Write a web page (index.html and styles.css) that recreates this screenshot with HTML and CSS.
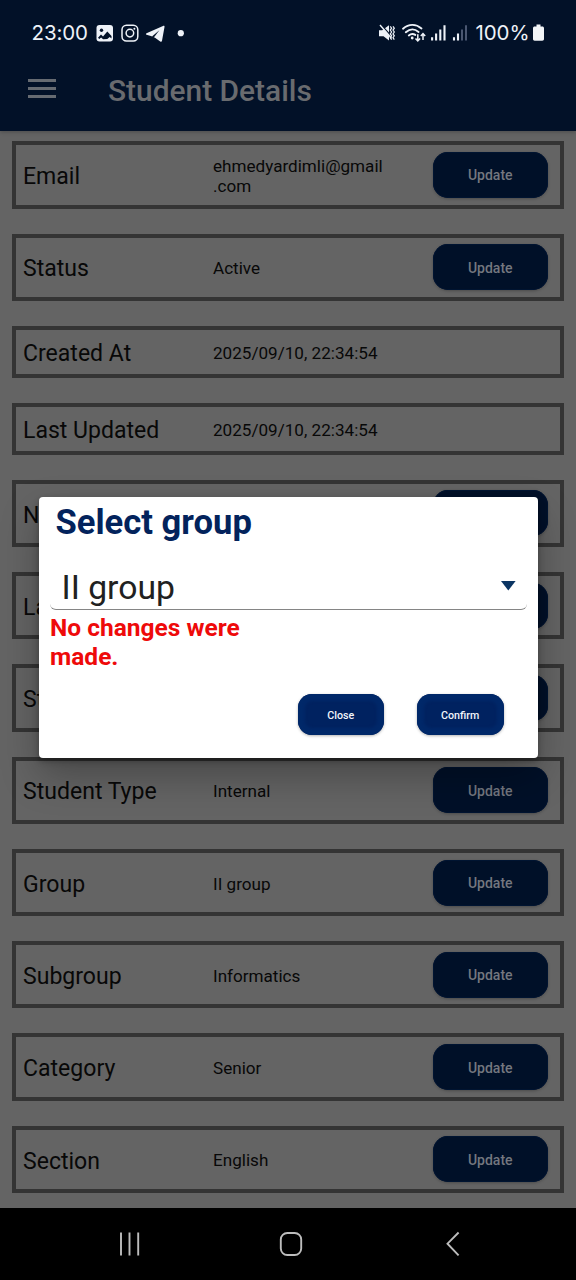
FILE: index.html
```html
<!DOCTYPE html>
<html lang="en">
<head>
<meta charset="utf-8">
<title>Student Details</title>
<link rel="stylesheet" href="styles.css">
</head>
<body>
<div class="screen">
  <header class="header">
    <div class="status">
      <span class="clock">23:00</span>
      <svg class="status-left" width="94" height="24" viewBox="94 21 94 24">
        <rect x="96.500" y="25" width="16.500" height="16.500" rx="3" fill="#eef2f8"/>
        <circle cx="101.500" cy="30.300" r="1.700" fill="#021128"/>
        <path d="M98 37.800l3-3.200 2 1.800 4.300-5 4.200 4.600v2.500l-1.800-1.500-2.400 2-4.200.2-2-1.700-1.800 1.500z" fill="#021128"/>
        <rect x="122" y="25.200" width="15.800" height="15.800" rx="4.500" fill="none" stroke="#eef2f8" stroke-width="1.500"/>
        <circle cx="129.900" cy="33.100" r="3.800" fill="none" stroke="#eef2f8" stroke-width="1.500"/>
        <circle cx="134.400" cy="28.700" r="1" fill="#eef2f8"/>
        <path d="M146.500 33.200l16.500-7.300c1.100-.4 1.700.1 1.500 1.200l-2.500 13.700c-.2 1.100-.9 1.300-1.800.7l-4.800-3.400-1.400-.9-2.400-.9-5-1.500c-.9-.3-.9-.8-.1-1.600z" fill="#eef2f8"/>
        <path d="M152 36.600l7.400-6.300-5.600 7.100z" fill="#021128"/>
        <circle cx="180.800" cy="33.200" r="3.100" fill="#eef2f8"/>
      </svg>
      <svg class="status-right" width="92" height="24" viewBox="377 21 92 24">
        <path d="M379 30.200h3.200l6.800-4.900v15.200l-5.500-4.200H379z" fill="#eef2f8"/>
        <path d="M380.600 24.200l12.500 14" stroke="#021128" stroke-width="1.400"/>
        <path d="M380 25l11.500 13.200" stroke="#eef2f8" stroke-width="1.400"/>
        <path d="M390.300 26.300l1.300 1.900-1.300 1.900 1.300 1.900-1.300 1.900 1.300 1.900-1.300 1.900 1.300 1.900M393 26.300l1.300 1.900-1.300 1.900 1.300 1.900-1.300 1.900 1.300 1.900-1.300 1.900 1.300 1.900" fill="none" stroke="#eef2f8" stroke-width="1.200"/>
        <g fill="none" stroke="#eef2f8" stroke-width="1.900" stroke-linecap="round">
          <path d="M403 28.700c5.800-5 13-5 18.500-.2M405.800 32.200c4.200-3.600 8.800-3.600 12.800-.2M408.800 35.400c2.200-1.800 4.300-1.900 6.500-.5"/>
        </g>
        <circle cx="412.200" cy="38" r="1.400" fill="#eef2f8"/>
        <path d="M417.800 34.300v6.300m-2.300-2.200l2.300 2.500 2.300-2.500M423 40v-6.200m-2.200 2.300l2.200-2.500 2.200 2.500" fill="none" stroke="#eef2f8" stroke-width="1.500"/>
        <g stroke="#eef2f8" stroke-width="2.100">
          <path d="M432.100 37.300V40.500M436.100 33.500v7M440.300 29.500v11M444.500 25.300v15.200"/>
          <path d="M454 37.300V40.500M458 33.500v7"/>
          <path d="M462 29.500v11M466 25.300v15.200" stroke="#53607a" stroke-width="1.800"/>
        </g>
      </svg>
      <span class="percent">100%</span>
      <svg class="battery" width="14" height="20" viewBox="0 0 14 20">
        <path d="M4.500 1.500h4v2h1.800c1 0 1.700.6 1.700 1.700v10.800c0 1-.7 1.700-1.700 1.700H2.700C1.700 17.700 1 17 1 16V5.200c0-1.100.7-1.700 1.700-1.700h1.800z" fill="#f2f4f7"/>
      </svg>
    </div>
    <div class="appbar">
      <div class="menu"><i></i><i></i><i></i></div>
      <h1 class="title">Student Details</h1>
    </div>
  </header>

  <main class="list">
    <section class="row"><span class="label">Email</span><span class="value">ehmedyardimli@gmail<br>.com</span><button class="update">Update</button></section>
    <section class="row"><span class="label">Status</span><span class="value">Active</span><button class="update">Update</button></section>
    <section class="row short"><span class="label">Created At</span><span class="value">2025/09/10, 22:34:54</span></section>
    <section class="row short"><span class="label">Last Updated</span><span class="value">2025/09/10, 22:34:54</span></section>
    <section class="row"><span class="label">N</span><span class="value"></span><button class="update"></button></section>
    <section class="row"><span class="label">La</span><span class="value"></span><button class="update"></button></section>
    <section class="row"><span class="label">St</span><span class="value"></span><button class="update"></button></section>
    <section class="row"><span class="label">Student Type</span><span class="value">Internal</span><button class="update">Update</button></section>
    <section class="row"><span class="label">Group</span><span class="value">II group</span><button class="update">Update</button></section>
    <section class="row"><span class="label">Subgroup</span><span class="value">Informatics</span><button class="update">Update</button></section>
    <section class="row"><span class="label">Category</span><span class="value">Senior</span><button class="update">Update</button></section>
    <section class="row"><span class="label">Section</span><span class="value">English</span><button class="update">Update</button></section>
  </main>

  <nav class="navbar">
    <svg width="28" height="28" viewBox="0 0 28 28"><path d="M5 2.500v23M13.500 2.500v23M22.200 2.500v23" stroke="#bdbdbd" stroke-width="1.900"/></svg>
    <svg width="28" height="28" viewBox="0 0 28 28"><rect x="3.800" y="3" width="20.400" height="22" rx="6.500" fill="none" stroke="#bdbdbd" stroke-width="1.900"/></svg>
    <svg width="28" height="28" viewBox="0 0 28 28"><path d="M19.600 2.500L8.500 13.700l11.100 11.600" fill="none" stroke="#bdbdbd" stroke-width="1.900"/></svg>
  </nav>

  <div class="dialog">
    <h2 class="dialog-title">Select group</h2>
    <div class="select">
      <span>II group</span>
      <svg width="15" height="10" viewBox="0 0 15 10"><path d="M0 0h14.600L7.300 9.600z" fill="#0b3563"/></svg>
    </div>
    <p class="error">No changes were made.</p>
    <div class="actions">
      <button class="action">Close</button>
      <button class="action">Confirm</button>
    </div>
  </div>
</div>
</body>
</html>
```
FILE: styles.css
```css
* { box-sizing: border-box; }
body { margin: 0; font-family: Roboto, "Liberation Sans", sans-serif; background: #646464; }
button { font-family: inherit; border: 0; padding: 0; margin: 0; }
h1, h2, p { margin: 0; }
.screen {
  position: relative;
  width: 576px;
  height: 1280px;
  display: flex;
  flex-direction: column;
  overflow: hidden;
  background: #646464;
}
.header {
  height: 131px;
  flex: none;
  background: #021128;
  box-shadow: 0 1px 4px rgba(0, 0, 0, .25);
}
.status {
  height: 60px;
  padding: 6px 0 0 31.500px;
  display: flex;
  align-items: center;
  color: #eef2f8;
  font-family: Inter, Roboto, sans-serif;
  font-size: 20.500px;
}
.clock { width: 62.500px; letter-spacing: -.1px; padding-bottom: 1.500px; }
.status-right { margin-left: 189px; }
.percent { width: 56px; margin-left: 6.500px; letter-spacing: -.1px; white-space: nowrap; padding-bottom: 1.500px; }
.battery { margin-left: .5px; }
.appbar { height: 60px; display: flex; align-items: center; padding-left: 28px; }
.menu { width: 28px; display: flex; flex-direction: column; gap: 5px; margin-top: -3px; }
.menu i { height: 3px; background: #666b72; }
.title { margin-left: 52px; font-size: 29.900px; font-weight: 500; color: #696b6f; }

.list {
  flex: 1;
  min-height: 0;
  padding: 10.300px 12px 0;
  display: flex;
  flex-direction: column;
  gap: 25px;
}
.row {
  height: 67.300px;
  flex: none;
  border: 4px solid #343434;
  padding: 0 12px 0 7px;
  display: flex;
  align-items: center;
  color: #080808;
}
.row.short { height: 51.900px; }
.label { width: 190px; font-size: 23.050px; line-height: 28px; padding-top: 4.500px; }
.row.short .label { padding-top: 4px; }
.value { flex: 1; font-size: 17.100px; line-height: 20px; padding-top: 2px; }
.update {
  width: 115.500px;
  height: 46px;
  padding-top: 1px;
  border-radius: 15px;
  background: #001028;
  color: #74777f;
  font-size: 14px;
  font-weight: 500;
  box-shadow: 0 1px 3px rgba(0, 0, 0, .25), inset 0 0 0 1px #001431;
}

.navbar {
  height: 72px;
  flex: none;
  background: #000;
  display: flex;
  align-items: center;
  justify-content: space-between;
  padding: 0 109px 0 115.500px;
}

.dialog {
  position: absolute;
  left: 38.500px;
  top: 496.500px;
  width: 499.500px;
  height: 261.500px;
  padding: 4px 11.500px 0;
  border-radius: 4px;
  background: #fff;
  box-shadow: 0 18px 38px rgba(0, 0, 0, .28), 0 3px 6px rgba(0, 0, 0, .3);
}
.dialog-title { padding-left: 5.500px; font-size: 34.600px; line-height: 42px; font-weight: 700; color: #03235c; }
.select {
  margin-top: 16px;
  height: 51px;
  padding: 5px 10.500px 0 11.500px;
  display: flex;
  align-items: center;
  justify-content: space-between;
  border-bottom: 1.500px solid #858585;
  border-radius: 6px;
  font-size: 33.700px;
  color: #212121;
}
.select span { padding-top: 2px; }
.error { width: 210px; margin-top: 3px; font-size: 24.500px; line-height: 29px; font-weight: 700; color: #ee0a0a; }
.actions { display: flex; justify-content: flex-end; gap: 33px; margin-top: 23.500px; padding-right: 23px; }
.action {
  width: 86.500px;
  height: 40.500px;
  padding-top: 2.500px;
  border-radius: 14px;
  background: #002260;
  color: #f2f5fb;
  font-size: 10.700px;
  font-weight: 500;
  box-shadow: 0 1px 3px rgba(0, 0, 0, .3), inset 0 0 3px 7px #002869;
}
```
